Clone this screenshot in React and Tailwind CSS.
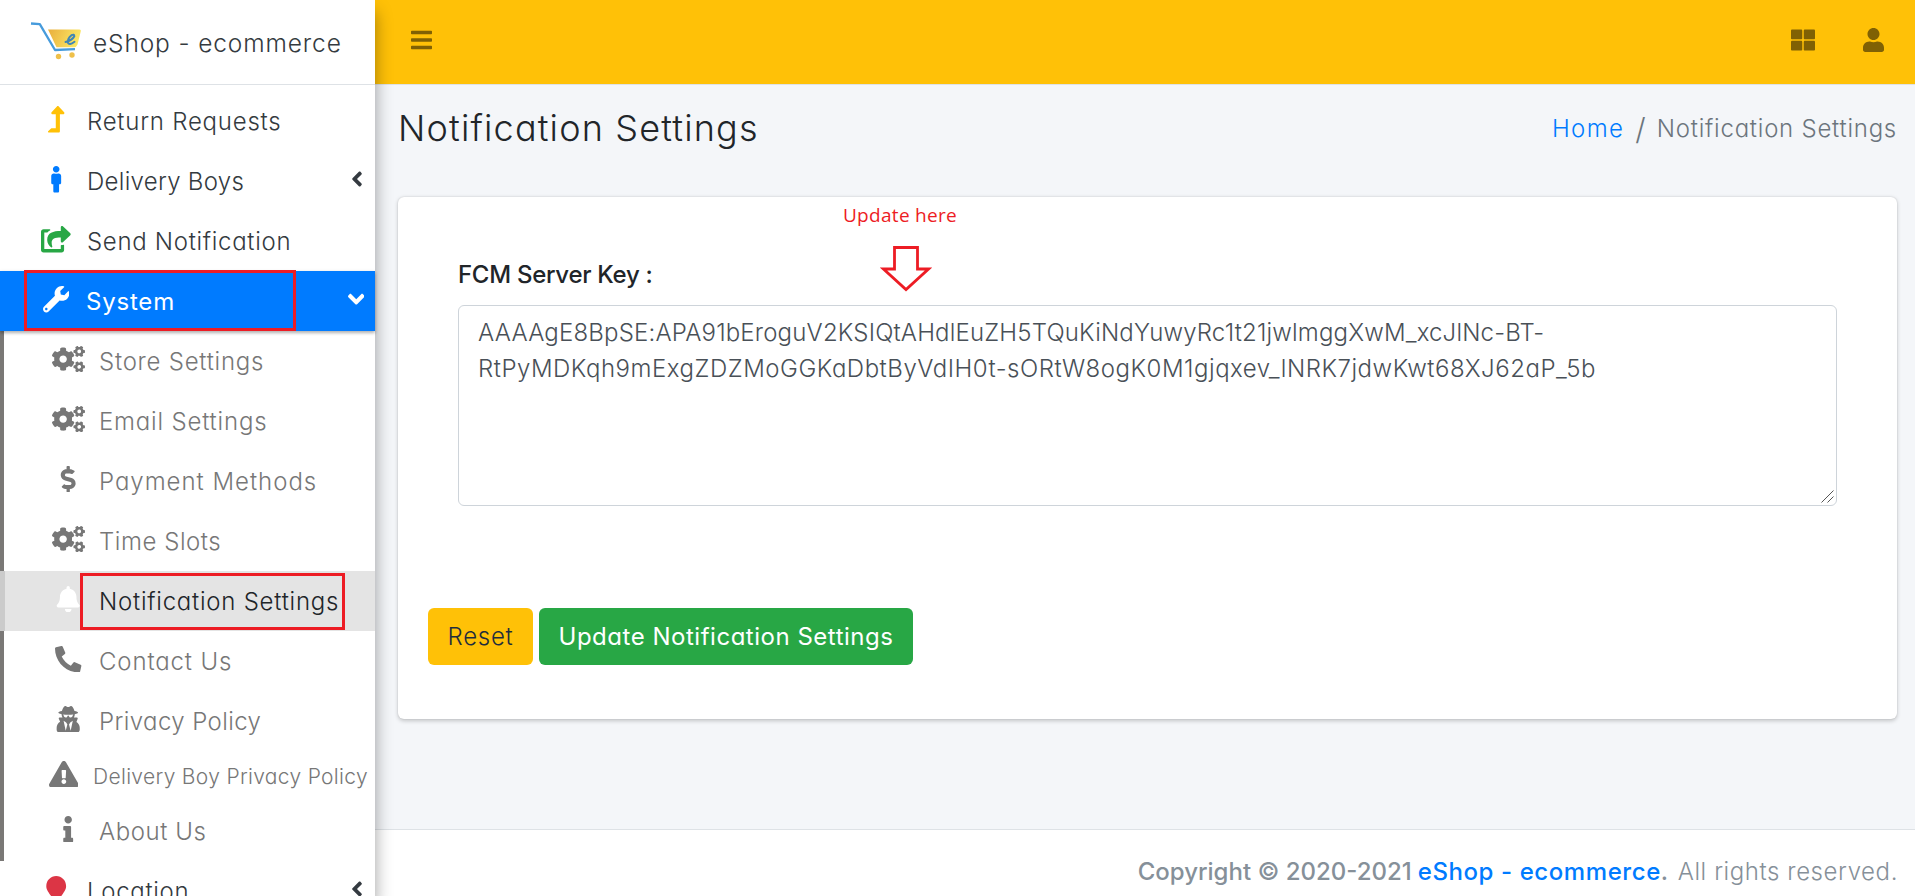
import {
  FaAngleDown,
  FaAngleLeft,
  FaBars,
  FaBell,
  FaCogs,
  FaDollarSign,
  FaExclamationTriangle,
  FaInfo,
  FaLevelUpAlt,
  FaMale,
  FaMapMarker,
  FaPhoneAlt,
  FaShareSquare,
  FaThLarge,
  FaUser,
  FaUserSecret,
  FaWrench,
} from "react-icons/fa";

const topItems = [
  { label: "Return Requests", Icon: FaLevelUpAlt, color: "text-[#ffc107]", spacing: "tracking-[0.77px]" },
  { label: "Delivery Boys", Icon: FaMale, color: "text-[#007bff]", spacing: "tracking-[0.29px]", expandable: true },
  { label: "Send Notification", Icon: FaShareSquare, color: "text-[#28a745]", spacing: "tracking-[0.69px]", iconWidth: "w-[29.7px]" },
];

const systemItems = [
  { label: "Store Settings", Icon: FaCogs, spacing: "tracking-[0.75px]", iconWidth: "w-[33px]" },
  { label: "Email Settings", Icon: FaCogs, spacing: "tracking-[0.81px]", iconWidth: "w-[33px]" },
  { label: "Payment Methods", Icon: FaDollarSign, spacing: "tracking-[0.98px]" },
  { label: "Time Slots", Icon: FaCogs, spacing: "tracking-[0.55px]", iconWidth: "w-[33px]" },
  { label: "Notification Settings", Icon: FaBell, spacing: "tracking-[0.76px]", active: true },
  { label: "Contact Us", Icon: FaPhoneAlt, spacing: "tracking-[0.86px]" },
  { label: "Privacy Policy", Icon: FaUserSecret, spacing: "tracking-[0.41px]" },
  { label: "Delivery Boy Privacy Policy", Icon: FaExclamationTriangle, spacing: "tracking-[0.32px]", iconWidth: "w-[29.7px]", compact: true },
  { label: "About Us", Icon: FaInfo, spacing: "tracking-[0.58px]" },
];

function CartLogo() {
  return (
    <svg className="h-[40px] w-[52px] shrink-0" viewBox="0 0 52 40">
      <defs>
        <linearGradient id="basket" x1="0" y1="0" x2="1" y2="0.25">
          <stop offset="0" stopColor="#e9ae3c" />
          <stop offset="1" stopColor="#fbe765" />
        </linearGradient>
      </defs>
      <path d="M18 7.500H49.500Q51.300 7.500 50.800 9.300L47.500 22.500Q46.500 25.300 44 25.300H26.500Z" fill="url(#basket)" />
      <path d="M1 1.500L9.800 2.200L25 28L45 27.200" fill="none" stroke="#469bdc" strokeWidth="2.300" strokeLinejoin="round" />
      <circle cx="28.500" cy="34.500" r="2.700" fill="#efc04a" />
      <circle cx="42" cy="33" r="2.700" fill="#efc04a" />
      <path d="M35.500 20Q42.500 18 44.300 14.200Q44.200 11.800 41.500 13.200Q37.500 16.500 37.800 20.500Q39.200 23.800 44.500 19.800" fill="none" stroke="#3f86b5" strokeWidth="2" strokeLinecap="round" />
    </svg>
  );
}

function NavItem({ label, Icon, color, spacing, expandable, iconWidth = "w-[26.4px]" }) {
  return (
    <a className="flex h-[60px] items-center pl-[37px] pr-[12px] text-[#343a40]">
      <span className={`flex w-[38px] justify-center pb-[3px] text-[26.4px] ${color}`}>
        <Icon className={`shrink-0 ${iconWidth}`} />
      </span>
      <span className={`ml-[12px] flex-1 pt-px ${spacing}`}>{label}</span>
      {expandable && <FaAngleLeft className="mb-[4px] w-[12px] text-[24px]" />}
    </a>
  );
}

function SubItem({ label, Icon, spacing, active, compact, iconWidth = "w-[26.4px]" }) {
  const height = compact ? "h-[50px]" : "h-[60px]";
  const tone = active ? "border-l-[5px] border-[#cbcbcb] bg-[#e4e4e4] text-[#212529]" : "border-l-4 border-[#7a7876] text-[#777777]";
  const inset = active ? "pl-[44px]" : compact ? "pl-[40px]" : "pl-[45px]";
  return (
    <a className={`flex items-center whitespace-nowrap ${height} ${tone} ${inset}`}>
      <span className={`flex w-[39px] shrink-0 justify-center pb-[4px] text-[26.4px] ${active ? "text-white" : ""}`}>
        <Icon className={`shrink-0 ${iconWidth}`} />
      </span>
      <span className={`pt-px ${compact ? "ml-[10px] text-[21px]" : "ml-[11px]"} ${spacing}`}>{label}</span>
    </a>
  );
}

function Sidebar() {
  return (
    <aside className="relative z-10 flex w-[375px] shrink-0 flex-col bg-white shadow-[0_12px_16px_rgba(0,0,0,0.38)]">
      <div className="flex h-[85px] shrink-0 items-center border-b border-[#dee2e6] pl-[30px] text-[24.5px] text-[#343a40]">
        <CartLogo />
        <span className="ml-[11px] mt-[3px] whitespace-nowrap font-light tracking-[0.87px]">eShop - ecommerce</span>
      </div>
      <nav className="flex flex-col pt-[6px]">
        {topItems.map((item) => (
          <NavItem key={item.label} {...item} />
        ))}
        <a className="relative flex h-[60px] items-center bg-[#007bff] pl-[37px] pr-[11px] font-normal text-white shadow-[0_1px_4px_rgba(0,0,0,0.12),0_2px_3px_rgba(0,0,0,0.24)]">
          <span className="flex w-[38px] justify-center pb-[3px] text-[26.4px]">
            <FaWrench className="shrink-0" />
          </span>
          <span className="ml-[11px] flex-1 pt-px tracking-[0.8px]">System</span>
          <FaAngleDown className="mb-[3px] w-[16.5px] text-[26.4px]" />
        </a>
        {systemItems.map((item) => (
          <SubItem key={item.label} {...item} />
        ))}
        <NavItem label="Location" Icon={FaMapMarker} color="text-[#dc3545]" spacing="tracking-[0.7px]" expandable />
      </nav>
      <div className="pointer-events-none absolute left-[24px] top-[270px] z-10 h-[61px] w-[272px] border-[3px] border-[#ed1c24]" />
      <div className="pointer-events-none absolute left-[80px] top-[573px] z-10 h-[57px] w-[265px] border-[3px] border-[#ed1c24]" />
    </aside>
  );
}

function UpdateHint() {
  return (
    <div className="pointer-events-none absolute left-[444px] top-[5px] flex w-[116px] flex-col items-center text-[#ed1c24]">
      <span className="whitespace-nowrap font-['Open_Sans','Noto_Sans',sans-serif] text-[19px] font-normal leading-[26px] tracking-[0.3px]">
        Update here
      </span>
      <svg className="ml-[11px] mt-[17px] h-[47px] w-[52px]" viewBox="0 0 52 47">
        <path d="M14.500 2.500H37.500V24H48.500L26 44.500L3.500 24H14.500Z" fill="#fff" stroke="#ed1c24" strokeWidth="2.800" />
      </svg>
    </div>
  );
}

function Content() {
  return (
    <main className="flex flex-1 flex-col pl-[23px] pr-[18px]">
      <div className="flex h-[87px] items-center justify-between">
        <h1 className="-mt-px text-[36px] font-light tracking-[1.16px]">Notification Settings</h1>
        <div className="mt-px flex items-center whitespace-nowrap text-[#6c757d]">
          <a className="tracking-[1.4px] text-[#007bff]">Home</a>
          <span className="mx-[11px] text-[30px] font-light leading-none">/</span>
          <span className="tracking-[0.76px]">Notification Settings</span>
        </div>
      </div>
      <section className="relative mt-[25px] h-[522px] rounded-[6px] bg-white px-[30px] pt-[60px] shadow-[0_0_1.5px_rgba(0,0,0,0.13),0_1.5px_4px_rgba(0,0,0,0.2)]">
        <div className="px-[30px]">
          <label className="block h-[36px] font-medium leading-[36px] tracking-[-0.28px]">FCM Server Key :</label>
          <div className="relative mt-[12px] h-[201px] whitespace-nowrap rounded-[6px] border border-[#ced4da] px-[19px] pt-[9px] leading-[36px] text-[#495057]">
            <span className="block tracking-[0.17px]">AAAAgE8BpSE:APA91bEroguV2KSIQtAHdlEuZH5TQuKiNdYuwyRc1t21jwlmggXwM_xcJlNc-BT-</span>
            <span className="block tracking-[0.52px]">RtPyMDKqh9mExgZDZMoGGKaDbtByVdIH0t-sORtW8ogK0M1gjqxev_lNRK7jdwKwt68XJ62aP_5b</span>
            <svg className="absolute bottom-[2px] right-[2px] h-[13px] w-[13px]" viewBox="0 0 13 13">
              <path d="M0.500 12.500L12.500 0.500M6.500 12.500L12.500 6.500" stroke="#555" strokeWidth="1" />
            </svg>
          </div>
        </div>
        <div className="mt-[102px] flex gap-[6px] whitespace-nowrap">
          <button className="h-[57px] w-[105px] rounded-[6px] bg-[#ffc107] tracking-[0.7px] text-[#1f2d3d]">Reset</button>
          <button className="h-[57px] w-[374px] rounded-[6px] bg-[#28a745] font-normal tracking-[0.52px] text-white">
            Update Notification Settings
          </button>
        </div>
        <UpdateHint />
      </section>
    </main>
  );
}

export default function App() {
  return (
    <div className="flex h-[896px] w-[1915px] overflow-hidden bg-[#f4f6f9] font-['Inter',sans-serif] text-[24px] font-[350] text-[#212529] [font-feature-settings:'cv11']">
      <Sidebar />
      <div className="flex flex-1 flex-col">
        <header className="flex h-[85px] items-center border-b border-[#dee2e6] bg-[#ffc107] pl-[36px] pr-[31px] text-[24px] text-[#806104]">
          <FaBars className="mb-[4px] w-[21px]" />
          <FaThLarge className="mb-[4px] ml-auto" />
          <FaUser className="mb-[4px] ml-[48px] w-[21px]" />
        </header>
        <Content />
        <footer className="flex h-[67px] shrink-0 items-start justify-end whitespace-nowrap border-t border-[#dee2e6] bg-white pr-[17px] pt-[24px] leading-[36px] text-[#869099]">
          <strong className="font-medium tracking-[0px]">Copyright © 2020-2021</strong>
          <strong className="ml-[6px] font-medium tracking-[0.58px]">
            <a className="text-[#007bff]">eShop - ecommerce</a>.
          </strong>
          <span className="ml-[9px] tracking-[0.58px]">All rights reserved.</span>
        </footer>
      </div>
    </div>
  );
}
